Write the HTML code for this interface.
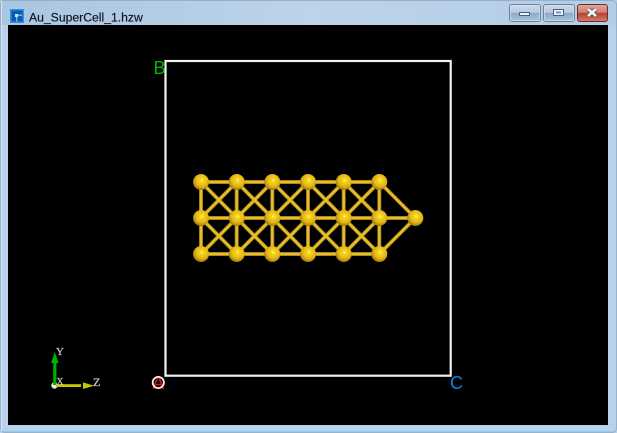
<!DOCTYPE html>
<html><head><meta charset="utf-8"><style>
html,body{margin:0;padding:0;background:#b9d1ea}
body{width:617px;height:433px;overflow:hidden;position:relative}
svg{position:absolute;left:0;top:0}
</style></head><body>
<svg width="617" height="433" viewBox="0 0 617 433" xmlns="http://www.w3.org/2000/svg">
<defs>
<linearGradient id="tb" x1="0" y1="0" x2="1" y2="0"><stop offset="0" stop-color="#a9c5e0"/><stop offset=".5" stop-color="#bdd3e9"/><stop offset="1" stop-color="#b3cde6"/></linearGradient>
<linearGradient id="bb" x1="0" y1="0" x2="0" y2="1"><stop offset="0" stop-color="#cddbea"/><stop offset=".48" stop-color="#b4c8de"/><stop offset=".5" stop-color="#8da8c6"/><stop offset="1" stop-color="#aec6de"/></linearGradient>
<linearGradient id="cb" x1="0" y1="0" x2="0" y2="1"><stop offset="0" stop-color="#e0a99d"/><stop offset=".48" stop-color="#d07c6c"/><stop offset=".5" stop-color="#b83c2a"/><stop offset="1" stop-color="#d4806e"/></linearGradient>
<radialGradient id="au" cx=".56" cy=".4" r=".66"><stop offset="0" stop-color="#fff48a"/><stop offset=".18" stop-color="#f6d41e"/><stop offset=".6" stop-color="#e2b414"/><stop offset="1" stop-color="#86680a"/></radialGradient>
<g id="atom"><circle r="8" fill="url(#au)"/></g>
<path id="b" d="M201 182H379.3M201 218H415.3M201 254H379.3M201 182V254M236.7 182V254M272.3 182V254M308 182V254M343.7 182V254M379.3 182V254M201 182L236.7 218L272.3 254M236.7 182L272.3 218L308 254M272.3 182L308 218L343.7 254M308 182L343.7 218L379.3 254M343.7 182L379.3 218M201 218L236.7 254M201 218L236.7 182M201 254L236.7 218L272.3 182M236.7 254L272.3 218L308 182M272.3 254L308 218L343.7 182M308 254L343.7 218L379.3 182M343.7 254L379.3 218M379.3 182L415.3 218L379.3 254" fill="none"/>
</defs>
<rect width="617" height="433" fill="#b9d1ea"/>
<rect width="617" height="25" fill="url(#tb)"/>
<rect x="0.5" y="0.5" width="616" height="432" rx="4" fill="none" stroke="#7f9cb8" stroke-opacity=".6"/>
<rect x="1" y="1" width="1" height="430" fill="#e2ebf4" opacity=".8"/>
<rect x="1" y="431" width="615" height="1" fill="#6fd2e6" opacity=".7"/>
<rect x="8" y="25" width="600" height="400" fill="#000"/>
<!-- icon -->
<rect x="10" y="9" width="14" height="14" fill="#2a92ea"/>
<rect x="11.5" y="10.5" width="11" height="11" fill="#0f5aa8"/>
<rect x="15" y="14" width="3" height="3" fill="#bfe0f8"/>
<rect x="18" y="14.5" width="4" height="1.5" fill="#6fb4e8"/>
<rect x="16" y="17" width="1.5" height="4.5" fill="#6fb4e8"/>
<text x="29" y="21.5" font-family="'Liberation Sans',sans-serif" font-size="12.2" fill="#0c141c" stroke="#0c141c" stroke-width=".15">Au_SuperCell_1.hzw</text>
<!-- window buttons -->
<rect x="509.5" y="4.5" width="31" height="17" rx="2.5" fill="url(#bb)" stroke="#6a80a0"/>
<rect x="510.5" y="5.5" width="29" height="15" rx="1.5" fill="none" stroke="#dce8f3" stroke-opacity=".55"/>
<rect x="519.5" y="12.5" width="10" height="3" fill="#eef2f7" stroke="#4a5f7c"/>
<rect x="543.5" y="4.5" width="31" height="17" rx="2.5" fill="url(#bb)" stroke="#6a80a0"/>
<rect x="544.5" y="5.5" width="29" height="15" rx="1.5" fill="none" stroke="#dce8f3" stroke-opacity=".55"/>
<rect x="553.5" y="9.5" width="10" height="6" fill="#eef2f7" stroke="#4a5f7c"/>
<rect x="556" y="11.5" width="5" height="2" fill="#7a90ad"/>
<rect x="577.5" y="4.5" width="30" height="17" rx="2.5" fill="url(#cb)" stroke="#6e2a30"/>
<path d="M588 9L596 16M596 9L588 16" stroke="#4a4850" stroke-width="4.4"/>
<path d="M588 9L596 16M596 9L588 16" stroke="#f2f2f2" stroke-width="2.8"/>
<!-- cell -->
<rect x="165.5" y="61" width="285.2" height="314.7" fill="none" stroke="#f2f2f2" stroke-width="2.2"/>
<text x="153.5" y="74" font-family="'Liberation Sans',sans-serif" font-size="18" fill="#00b400">B</text>
<text x="450" y="389" font-family="'Liberation Sans',sans-serif" font-size="18" fill="#0a84e4">C</text>
<text x="152.3" y="389" font-family="'Liberation Sans',sans-serif" font-size="18" fill="#e01010">A</text>
<circle cx="158.3" cy="382.5" r="5.6" fill="none" stroke="#f0f0f0" stroke-width="1.8"/>
<!-- bonds -->
<use href="#b" stroke="#94761a" stroke-width="4"/>
<use href="#b" stroke="#e8be28" stroke-width="2.4"/>
<!-- atoms -->
<use href="#atom" x="201" y="182"/><use href="#atom" x="236.7" y="182"/><use href="#atom" x="272.3" y="182"/><use href="#atom" x="308" y="182"/><use href="#atom" x="343.7" y="182"/><use href="#atom" x="379.3" y="182"/>
<use href="#atom" x="201" y="218"/><use href="#atom" x="236.7" y="218"/><use href="#atom" x="272.3" y="218"/><use href="#atom" x="308" y="218"/><use href="#atom" x="343.7" y="218"/><use href="#atom" x="379.3" y="218"/><use href="#atom" x="415.3" y="218"/>
<use href="#atom" x="201" y="254"/><use href="#atom" x="236.7" y="254"/><use href="#atom" x="272.3" y="254"/><use href="#atom" x="308" y="254"/><use href="#atom" x="343.7" y="254"/><use href="#atom" x="379.3" y="254"/>
<!-- axes -->
<circle cx="54.5" cy="385.5" r="3.2" fill="#e8e8e8"/>
<rect x="53.2" y="362" width="3.2" height="23" fill="#00b000"/>
<path d="M54.8 352L51 363H58.6Z" fill="#00b000"/>
<rect x="56" y="384.2" width="25" height="2.8" fill="#c8c800"/>
<path d="M83 382.4V389L94 385.7Z" fill="#c8c800"/>
<text x="56" y="355" font-family="'Liberation Serif',serif" font-size="11" fill="#c8c8c8" stroke="#c8c8c8" stroke-width=".25">Y</text>
<text x="56.5" y="384.5" font-family="'Liberation Serif',serif" font-size="9.5" fill="#c8c8c8" stroke="#c8c8c8" stroke-width=".25">X</text>
<text x="93" y="386" font-family="'Liberation Serif',serif" font-size="12" fill="#c8c8c8" stroke="#c8c8c8" stroke-width=".25">Z</text>
</svg>
</body></html>
